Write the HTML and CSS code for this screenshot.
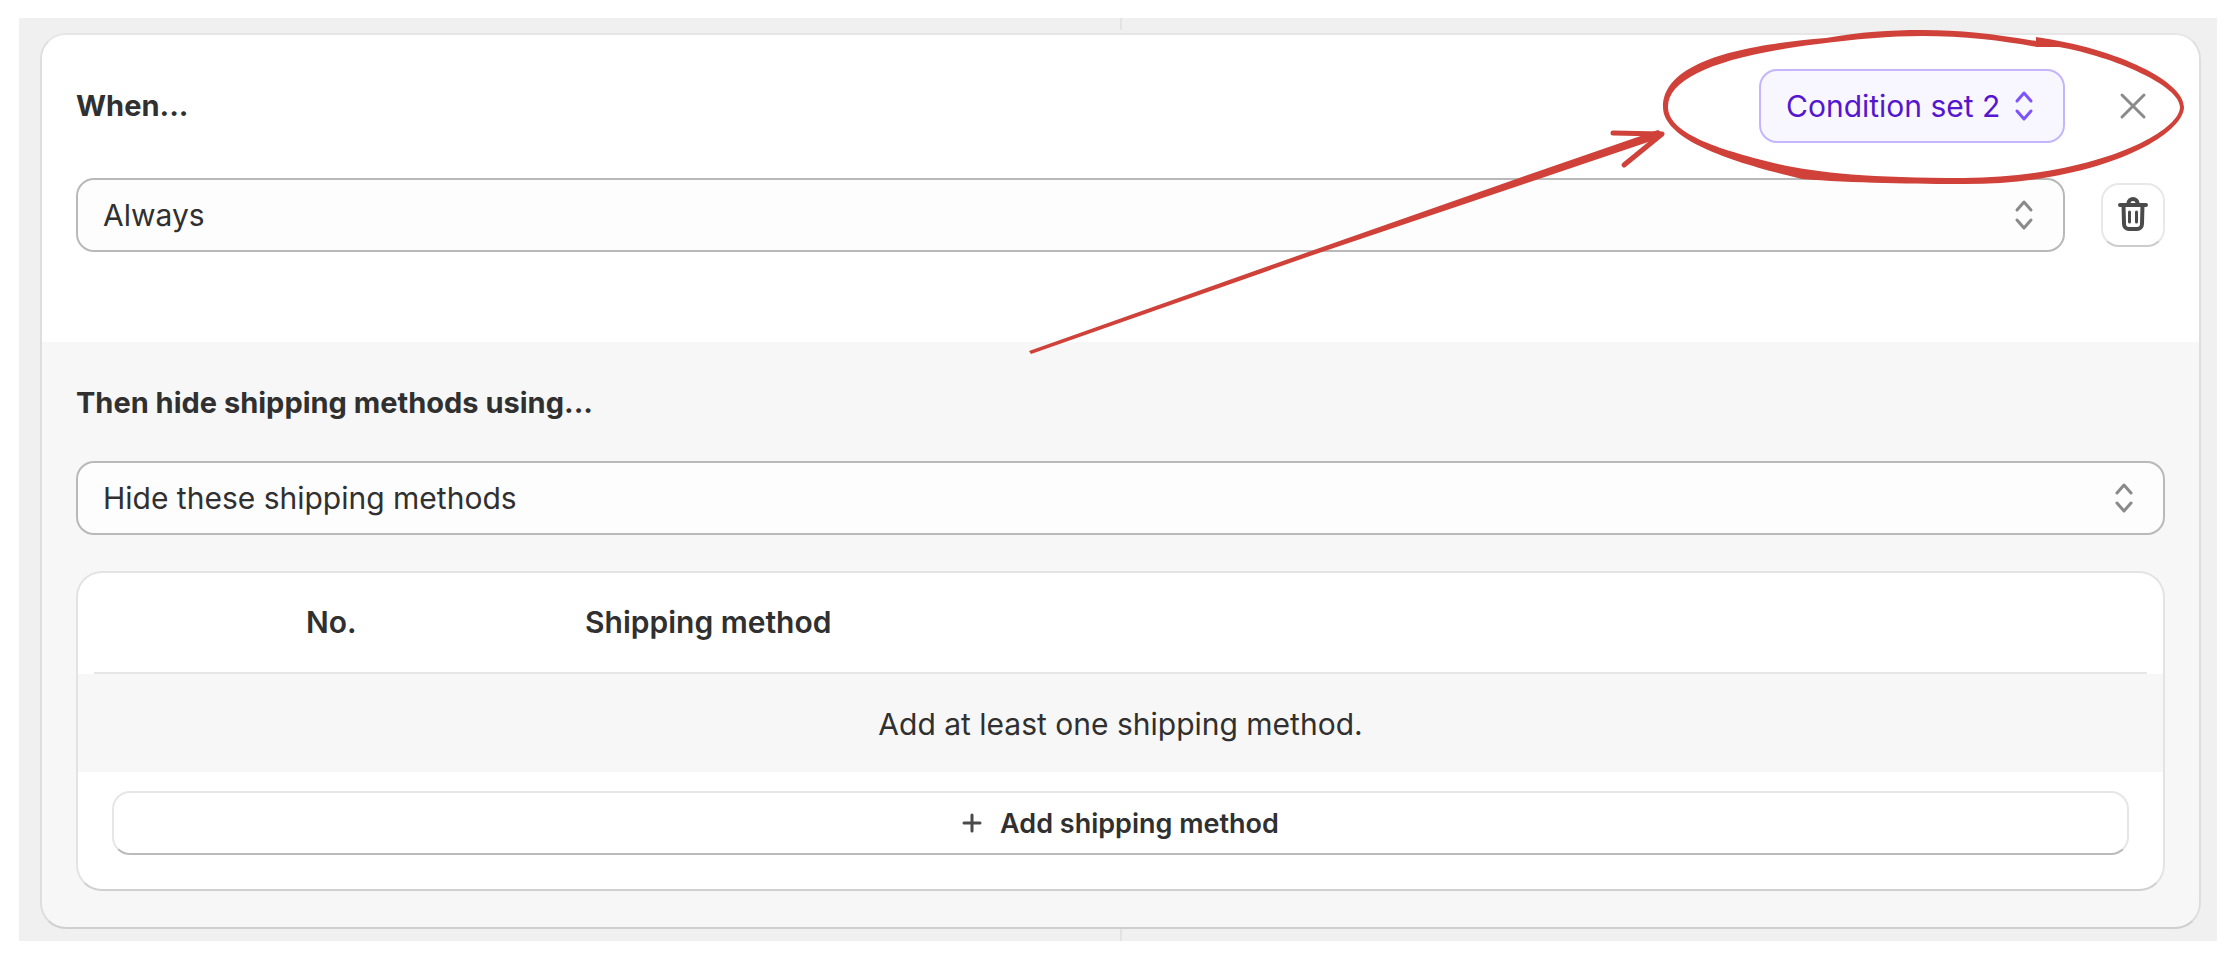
FILE: index.html
```html
<!DOCTYPE html>
<html lang="en">
<head>
    <meta charset="UTF-8">
    <meta name="viewport" content="width=device-width, initial-scale=1.0">
    <title>Shipping rule conditions</title>
    <link rel="stylesheet" href="styles.css">
</head>
<body>
    <main class="panel">
        <div class="connector connector-top"></div>

        <div class="rule-card">
            <section class="when">
                <div class="row">
                    <h2>When...</h2>
                    <div class="select-wrap condition">
                        <select aria-label="Condition set">
                            <option>Condition set 2</option>
                        </select>
                        <svg class="chevrons" viewBox="0 0 20 32"><path d="M3 11l7-8 7 8M3 21l7 8 7-8"/></svg>
                    </div>
                    <button class="close-btn" aria-label="Close">
                        <svg viewBox="0 0 28 28"><path d="M3 3l22 22M25 3L3 25"/></svg>
                    </button>
                </div>
                <div class="row">
                    <div class="select-wrap">
                        <select aria-label="When">
                            <option>Always</option>
                        </select>
                        <svg class="chevrons" viewBox="0 0 20 32"><path d="M3 11l7-8 7 8M3 21l7 8 7-8"/></svg>
                    </div>
                    <button class="delete-btn" aria-label="Delete condition">
                        <svg viewBox="0 0 40 40">
                            <path d="M7 10h26M15.500 9V8a4.500 4 0 0 1 9 0V9M10.500 10l.5 19a5 5 0 0 0 5 5h8a5 5 0 0 0 5-5l.5-19"/>
                            <path class="thin" d="M16.500 17v10M23.500 17v10"/>
                        </svg>
                    </button>
                </div>
            </section>

            <section class="then">
                <h2><label for="action">Then hide shipping methods using...</label></h2>
                <div class="select-wrap">
                    <select id="action">
                        <option>Hide these shipping methods</option>
                    </select>
                    <svg class="chevrons" viewBox="0 0 20 32"><path d="M3 11l7-8 7 8M3 21l7 8 7-8"/></svg>
                </div>

                <div class="methods">
                    <table>
                        <thead>
                            <tr>
                                <th class="col-handle"></th>
                                <th class="col-no">No.</th>
                                <th>Shipping method</th>
                            </tr>
                        </thead>
                        <tbody>
                            <tr>
                                <td class="empty" colspan="3">Add at least one shipping method.</td>
                            </tr>
                        </tbody>
                    </table>
                    <button class="add-btn">
                        <svg viewBox="0 0 20 20"><path d="M10 2v16M2 10h16"/></svg>
                        Add shipping method
                    </button>
                </div>
            </section>
        </div>

        <div class="connector"></div>

        <!-- hand drawn callout pointing at the condition set picker -->
        <svg class="callout" viewBox="1000 18 1200 352">
            <path fill-rule="evenodd" d="M1663 107C1663 62 1740 45 1826 38C1860 32 1890 30 1922 30C1960 30 1995 34 2036 41L2036 37C2120 49 2184 82 2184 107C2184 135 2100 184 1964 184C1920 184 1850 183 1802 179C1740 164 1663 142 1663 107Z
                M1668 107C1668 135 1725 151 1778 164C1820 173 1870 178 1964 178C2095 177 2180 132 2180 107C2180 86 2115 57 2059 47L2037 47C2005 41 1965 36 1922 36C1890 36 1855 39 1818 44C1722 56 1668 77 1668 107Z"/>
            <path d="M1029 351L1311 251L1522 177L1658 130L1664 134L1660 138L1524 184L1313 255L1031 354Z"/>
            <path class="barb" d="M1613 133L1662 134L1624 165"/>
        </svg>
    </main>
</body>
</html>
```
FILE: styles.css
```css
* {
    box-sizing: border-box;
}
body {
    margin: 0;
    padding: 18px 23px 17px 19px;
    background-color: #fff;
    color: #303030;
    font-family: Inter, sans-serif;
    font-size: 30px;
    line-height: 36px;
}
h2 {
    margin: 0;
    font-size: 29px;
    font-weight: 650;
}
button, select {
    font-family: inherit;
    color: inherit;
    cursor: pointer;
}
svg {
    display: block;
    fill: none;
    stroke: currentColor;
    stroke-width: 3px;
    stroke-linecap: round;
    stroke-linejoin: round;
}
.panel {
    position: relative;
    padding: 0 16px 0 21px;
    background-color: #f0f0f0;
}
.connector {
    width: 2px;
    height: 12px;
    margin: 0 auto;
    background-color: #e3e3e3;
}
.connector-top {
    margin-bottom: 3px;
}
.rule-card {
    border: 2px solid #dedede;
    border-top-color: #e6e6e6;
    border-bottom-color: #cfcfcf;
    border-radius: 26px;
    background-color: #f7f7f7;
    overflow: hidden;
}
.when {
    display: flex;
    flex-direction: column;
    gap: 35px;
    padding: 34px 34px 90px;
    background-color: #fff;
}
.row {
    display: flex;
    align-items: center;
    gap: 36px;
}
.row h2, .row .select-wrap {
    flex: 1;
}
.row .condition {
    flex: none;
}
.select-wrap {
    position: relative;
}
select {
    display: block;
    appearance: none;
    width: 100%;
    height: 74px;
    padding: 0 62px 0 25px;
    border: 2px solid #b9b9b9;
    border-radius: 18px;
    background-color: #fdfdfd;
    font-size: 30px;
}
.chevrons {
    position: absolute;
    top: 21px;
    right: 31px;
    width: 20px;
    height: 32px;
    color: #8a8a8a;
    pointer-events: none;
}
.condition select {
    border-color: #c4b5fd;
    background-color: #f8f7ff;
    color: #5416cf;
}
.condition .chevrons {
    color: #7f52ff;
}
.close-btn, .delete-btn {
    display: flex;
    align-items: center;
    justify-content: center;
    width: 64px;
    height: 64px;
    padding: 0;
    border: 0;
    background: none;
    color: #8a8a8a;
}
.close-btn svg {
    width: 28px;
    height: 28px;
}
.delete-btn {
    border: 2px solid #e8e8e8;
    border-bottom-color: #cccccc;
    border-radius: 18px;
    color: #4a4a4a;
}
.delete-btn svg {
    width: 40px;
    height: 40px;
    stroke-width: 4px;
}
.delete-btn .thin {
    stroke-width: 3px;
}
.then {
    padding: 43px 34px 36px;
}
.then h2 {
    margin-bottom: 40px;
}
.methods {
    margin-top: 36px;
    border: 2px solid #e3e3e3;
    border-bottom-color: #d0d0d0;
    border-radius: 26px;
    background-color: #fff;
    overflow: hidden;
}
table {
    width: 100%;
    table-layout: fixed;
    border-collapse: collapse;
}
thead tr {
    background: linear-gradient(#e6e6e6, #e6e6e6) bottom / calc(100% - 32px) 2px no-repeat;
}
th {
    height: 101px;
    padding: 0 0 4px;
    font-weight: 620;
    text-align: left;
}
.col-handle {
    width: 228px;
}
.col-no {
    width: 279px;
}
.empty {
    height: 98px;
    padding: 2px 0 0;
    background-color: #f7f7f7;
    text-align: center;
}
.add-btn {
    display: flex;
    align-items: center;
    justify-content: center;
    gap: 18px;
    width: calc(100% - 68px);
    height: 64px;
    margin: 19px 34px 34px;
    border: 2px solid #e6e6e6;
    border-bottom-color: #bbbbbb;
    border-radius: 18px;
    background-color: #fff;
    font-size: 27px;
    font-weight: 600;
}
.add-btn svg {
    width: 20px;
    height: 20px;
    color: #4a4a4a;
}
.callout {
    position: absolute;
    top: 0;
    right: 17px;
    width: 1200px;
    height: 352px;
    fill: #cf4139;
    stroke: none;
    pointer-events: none;
}
.callout .barb {
    fill: none;
    stroke: #cf4139;
    stroke-width: 5px;
}
```
